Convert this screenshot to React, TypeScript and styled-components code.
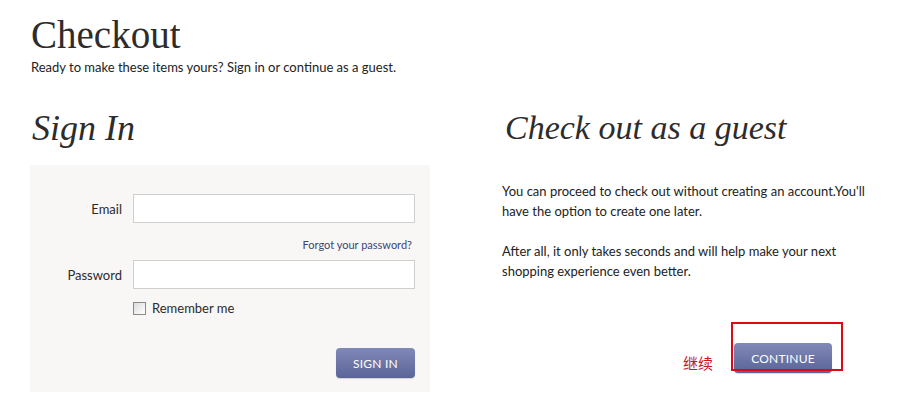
import styled, { createGlobalStyle } from "styled-components";

const GlobalStyle = createGlobalStyle`
  html, body {
    margin: 0;
    padding: 0;
    background: #ffffff;
  }
  body {
    font-family: "Lato", "Liberation Sans", sans-serif;
    color: #2b2b2b;
  }
`;

const Page = styled.div`
  width: 901px;
  height: 409px;
  padding: 14px 0 0 30px;
  box-sizing: border-box;
  overflow: hidden;
`;

const Title = styled.h1`
  margin: 0;
  font-family: "Liberation Serif", serif;
  font-weight: normal;
  font-size: 39px;
  line-height: 42px;
  color: #2e2c2b;
  padding-left: 1px;
`;

const Lead = styled.p`
  margin: 3px 0 0 1px;
  font-size: 13px;
  line-height: 16px;
  color: #222;
`;

const Columns = styled.div`
  display: grid;
  grid-template-columns: 400px 360px;
  column-gap: 72px;
  margin-top: 33px;
`;

const Column = styled.section`
  display: flex;
  flex-direction: column;
`;

const Heading = styled.h2<{ $indent: number; $size: number }>`
  margin: 0 0 0 ${(p) => p.$indent}px;
  font-family: "Liberation Serif", serif;
  font-style: italic;
  font-weight: normal;
  font-size: ${(p) => p.$size}px;
  line-height: 40px;
  color: #2e2c2b;
`;

const Panel = styled.form`
  margin-top: 17px;
  height: 227px;
  background: #f8f7f5;
  box-sizing: border-box;
  padding: 29px 15px 0 0;
  display: grid;
  grid-template-columns: 92px 282px;
  column-gap: 11px;
  align-content: start;
`;

const Label = styled.label`
  font-size: 13px;
  color: #2b2b2b;
  text-align: right;
  align-self: center;
`;

const Input = styled.input`
  width: 282px;
  height: 29px;
  box-sizing: border-box;
  border: 1px solid #cfcfcf;
  background: #fff;
  margin: 0;
  padding: 0 6px;
`;

const ForgotLink = styled.a`
  grid-column: 2;
  justify-self: end;
  margin: 15px 3px 8px 0;
  font-size: 11px;
  line-height: 14px;
  color: #3a4575;
  text-decoration: none;
`;

const RememberRow = styled.label`
  grid-column: 2;
  display: flex;
  align-items: center;
  gap: 6px;
  margin-top: 11px;
  font-size: 13px;
  line-height: 16px;
  color: #2b2b2b;
`;

const Box = styled.span`
  width: 11px;
  height: 11px;
  border: 1px solid #8a8a8a;
  background: linear-gradient(135deg, #dcdcdc, #ffffff);
`;

const Button = styled.button<{ $width: number }>`
  width: ${(p) => p.$width}px;
  height: 30px;
  border: 0;
  border-radius: 4px;
  background: linear-gradient(#8089b8, #5b6497);
  color: #fff;
  font-family: "Lato", "Liberation Sans", sans-serif;
  font-size: 12px;
  letter-spacing: 0.2px;
  padding: 0;
  box-shadow: 0 1px 1px rgba(0, 0, 0, 0.15);
`;

const SignInButton = styled(Button)`
  grid-column: 2;
  justify-self: end;
  margin-top: 32px;
`;

const Copy = styled.p`
  margin: 0;
  font-size: 13px;
  line-height: 20px;
  color: #222;
  width: 380px;
`;

const Copies = styled.div`
  margin: 33px 0 0 0;
  display: flex;
  flex-direction: column;
  gap: 20px;
`;

const ContinueRow = styled.div`
  display: flex;
  align-items: center;
  gap: 21px;
  margin: 62px 0 0 181px;
`;

const Note = styled.span`
  font-family: "Noto Sans CJK SC", sans-serif;
  font-size: 15px;
  color: #c8161d;
  margin-top: 9px;
`;

const Marked = styled.div`
  position: relative;
`;

const Highlight = styled.div`
  position: absolute;
  left: -3px;
  top: -21px;
  width: 112px;
  height: 49px;
  border: 2px solid #e30613;
  box-sizing: border-box;
`;

export default function App() {
  return (
    <Page>
      <GlobalStyle />
      <Title>Checkout</Title>
      <Lead>Ready to make these items yours? Sign in or continue as a guest.</Lead>
      <Columns>
        <Column>
          <Heading $indent={2} $size={36}>Sign In</Heading>
          <Panel onSubmit={(e) => e.preventDefault()}>
            <Label htmlFor="email">Email</Label>
            <Input id="email" type="text" />
            <ForgotLink href="#">Forgot your password?</ForgotLink>
            <Label htmlFor="password">Password</Label>
            <Input id="password" type="password" />
            <RememberRow>
              <Box />
              Remember me
            </RememberRow>
            <SignInButton $width={79}>SIGN IN</SignInButton>
          </Panel>
        </Column>
        <Column>
          <Heading $indent={3} $size={34}>Check out as a guest</Heading>
          <Copies>
            <Copy>
              You can proceed to check out without creating an account.You'll
              have the option to create one later.
            </Copy>
            <Copy>
              After all, it only takes seconds and will help make your next
              shopping experience even better.
            </Copy>
          </Copies>
          <ContinueRow>
            <Note>继续</Note>
            <Marked>
              <Button $width={98}>CONTINUE</Button>
              <Highlight />
            </Marked>
          </ContinueRow>
        </Column>
      </Columns>
    </Page>
  );
}
